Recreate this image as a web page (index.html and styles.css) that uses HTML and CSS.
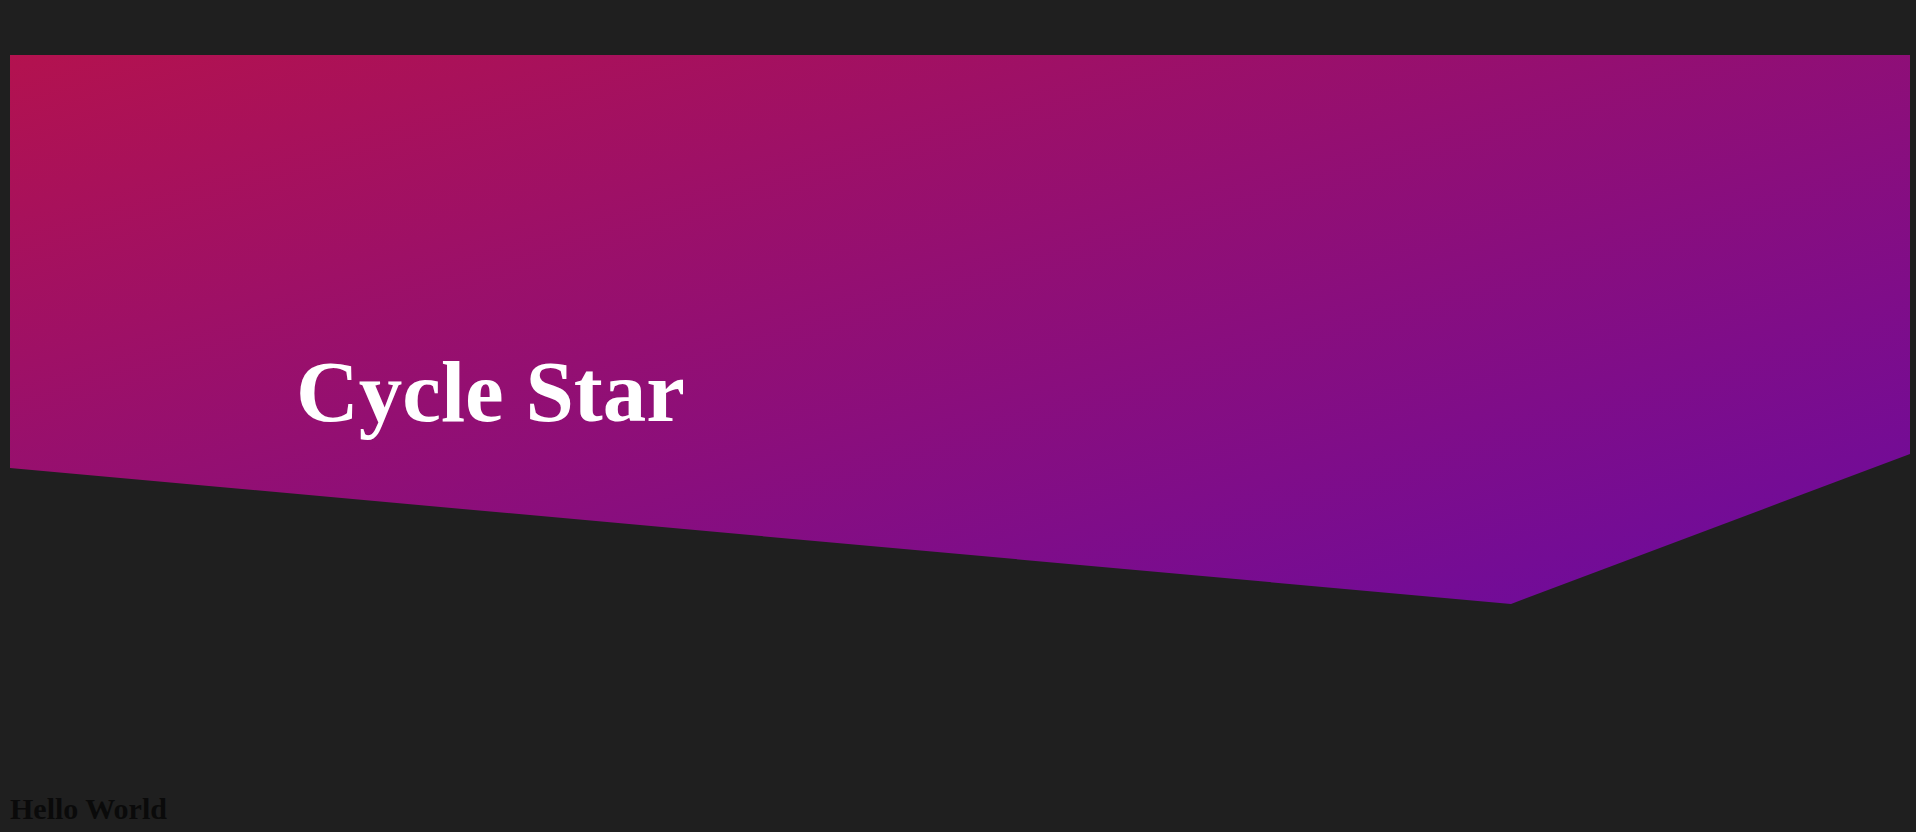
FILE: index.html
```html
<!DOCTYPE html>
<html>
<head>
<meta charset="utf-8">
<link rel="stylesheet" href="styles.css">
</head>
<body>
<header class="hero">
  <h1 class="hero-title">Cycle Star</h1>
</header>
<h2 class="greeting">Hello World</h2>
</body>
</html>
```
FILE: styles.css
```css
html, body {
  margin: 0;
  background: #1f1f1f;
}
body {
  padding: 55px 6px 0 10px;
  font-family: "Liberation Serif", "Times New Roman", serif;
  overflow: hidden;
  height: 832px;
  box-sizing: border-box;
}
.hero {
  height: 549px;
  background: linear-gradient(to bottom right, #b3124f, #6a0ba0);
  clip-path: polygon(0 0, 100% 0, 100% 399px, 1501px 100%, 0 413px);
  padding: 293px 0 0 286px;
  box-sizing: border-box;
}
.hero-title {
  margin: 0;
  font-size: 87px;
  line-height: 1;
  font-weight: bold;
  color: #ffffff;
}
.greeting {
  margin: 190px 0 0 0;
  font-size: 30px;
  line-height: 1;
  font-weight: bold;
  color: #0a0a0a;
}
```
